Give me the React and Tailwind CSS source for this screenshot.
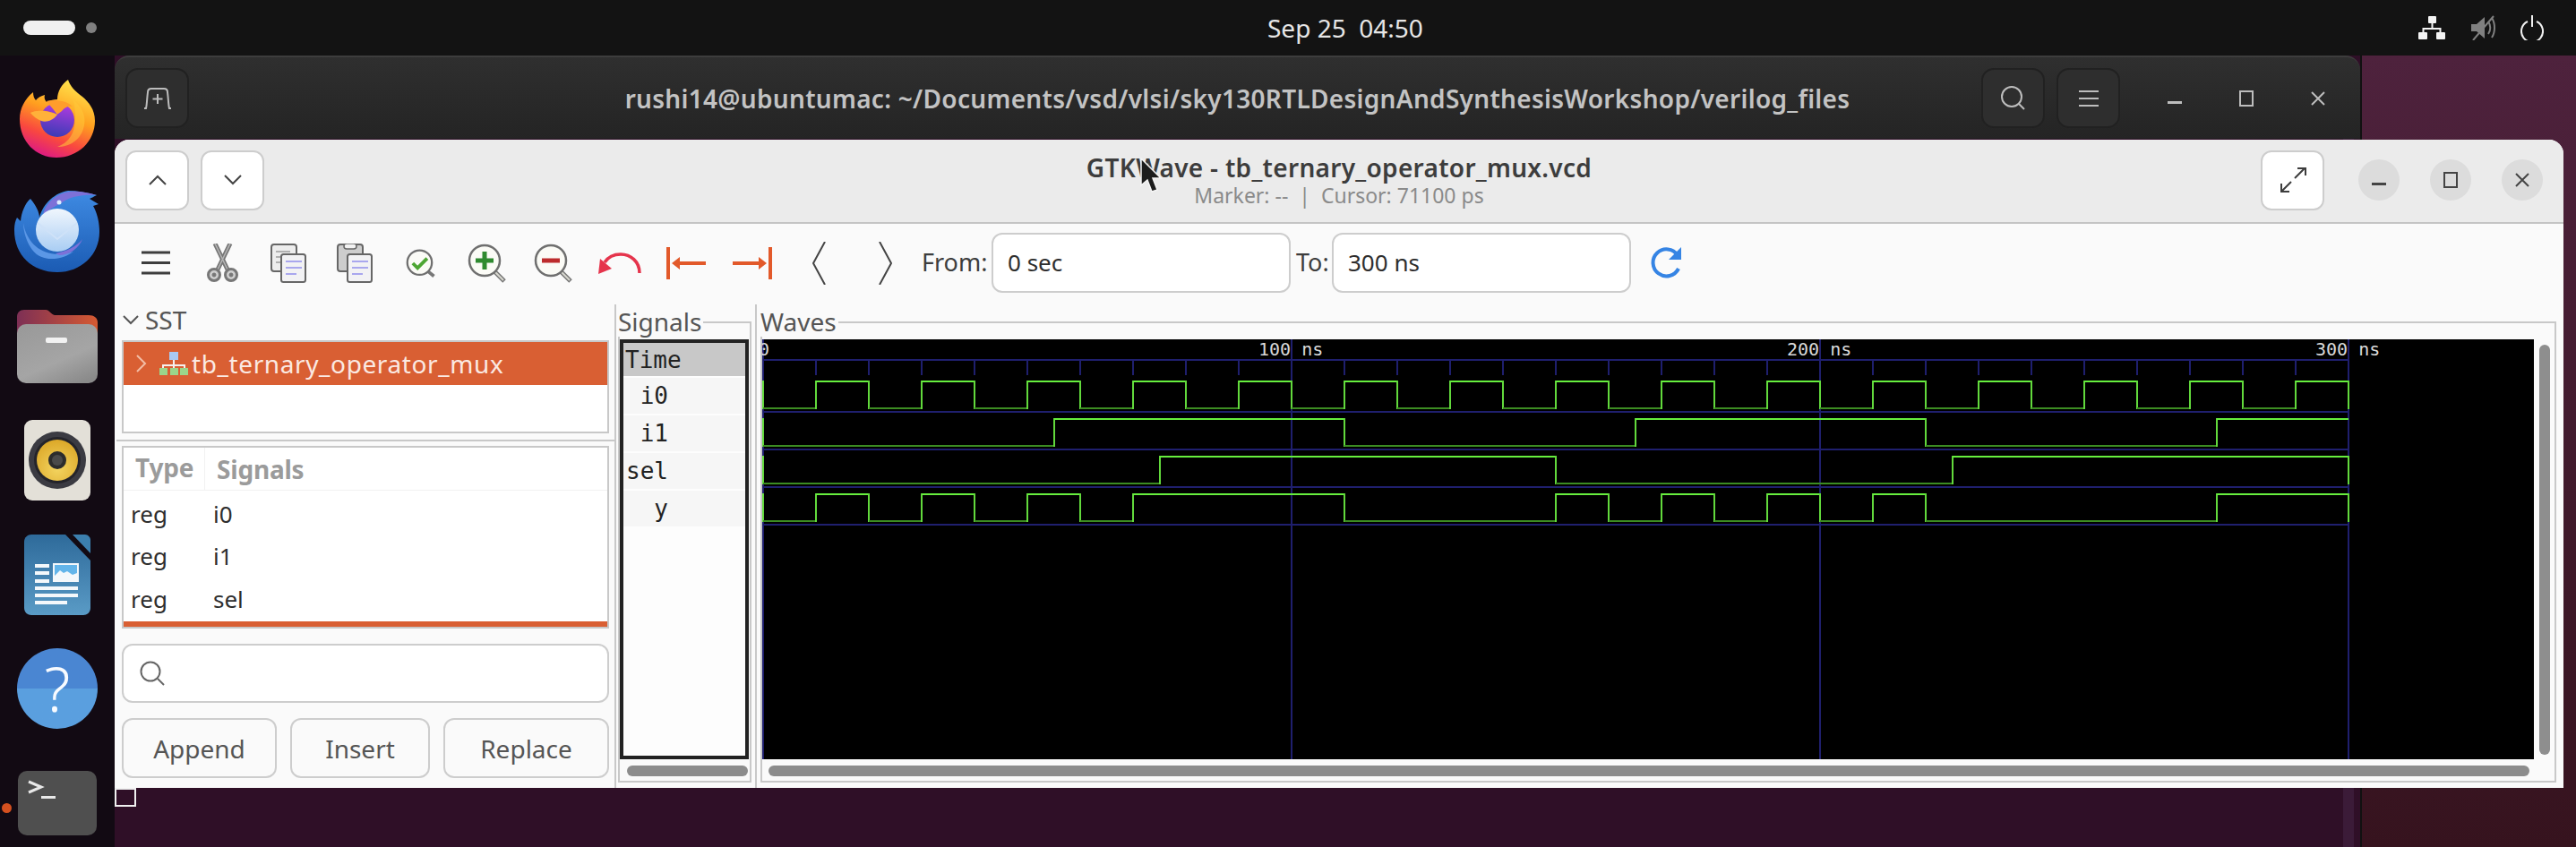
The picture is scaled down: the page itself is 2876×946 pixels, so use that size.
import React from 'react';

const UI = "font-['Noto_Sans',sans-serif]";
const MONO = "font-['DejaVu_Sans_Mono',monospace]";

// gtkwave timing, 5.9px per ns from the left edge of the canvas
const tx = (t) => 1 + t * 5.9;
const i0 = (t) => Math.floor(t / 10) % 2 === 1;
const edges = (list, t) => list.filter((e) => e <= t).length % 2 === 1;
const i1 = (t) => edges([55, 110, 165, 220, 275], t);
const sel = (t) => edges([75, 150, 225], t);
const y = (t) => (sel(t) ? i1(t) : i0(t));

const traces = [
    { name: 'i0', fn: i0, high: 47, low: 77, end: true },
    { name: 'i1', fn: i1, high: 89, low: 119, end: false },
    { name: 'sel', fn: sel, high: 131, low: 161, end: true },
    { name: 'y', fn: y, high: 173, low: 203, end: true },
];

function Trace({ trace }) {
    const parts = [];
    let start = 0;
    let value = trace.fn(0);
    for (let t = 5; t <= 300; t += 5) {
        const next = t === 300 ? !value : trace.fn(t);
        if (next !== value || t === 300) {
            const yy = value ? trace.high : trace.low;
            parts.push(<line key={`h${t}`} x1={tx(start)} x2={tx(t)} y1={yy} y2={yy} stroke={value ? '#66ee3e' : '#3c8c22'} strokeWidth="2" />);
            if (t < 300 || trace.end) {
                parts.push(<line key={`v${t}`} x1={tx(t)} x2={tx(t)} y1={trace.high - 1} y2={trace.low + 1} stroke="#62d93c" strokeWidth="2" />);
            }
            start = t;
            value = next;
        }
    }
    return (
        <g shapeRendering="crispEdges">
            <line x1={tx(0)} x2={tx(0)} y1={trace.high - 1} y2={trace.low + 1} stroke="#62d93c" strokeWidth="2" />
            {parts}
        </g>
    );
}

function WaveCanvas() {
    const ticks = [];
    for (let t = 10; t < 300; t += 10) ticks.push(t);
    return (
        <svg width="1978" height="469" className="block">
            <g stroke="#1f1f6e" strokeWidth="2" shapeRendering="crispEdges">
                {[23, 81, 123, 165, 207].map((v) => (
                    <line key={v} x1="0" x2={tx(300)} y1={v} y2={v} />
                ))}
                {ticks.map((t) => (
                    <line key={t} x1={tx(t)} x2={tx(t)} y1="23" y2="40" />
                ))}
                {[0, 100, 200, 300].map((t) => (
                    <line key={t} x1={tx(t)} x2={tx(t)} y1="0" y2="469" />
                ))}
            </g>
            {traces.map((trace) => (
                <Trace key={trace.name} trace={trace} />
            ))}
        </svg>
    );
}

function WinControls({ color, round }) {
    const slot = `flex h-[46px] w-[46px] items-center justify-center rounded-full ${round ? 'bg-[#dcdcdc]' : ''}`;
    return (
        <div className="flex items-center gap-[34px]">
            <div className={slot}>
                <svg width="16" height="16" fill="none" stroke={color} strokeWidth="3"><path d="M0 12.5h16" /></svg>
            </div>
            <div className={slot}>
                <svg width="16" height="18" fill="none" stroke={color} strokeWidth="2"><rect x="1" y="1" width="14" height="16" /></svg>
            </div>
            <div className={slot}>
                <svg width="16" height="16" fill="none" stroke={color} strokeWidth="2"><path d="M1 1l14 14M15 1L1 15" /></svg>
            </div>
        </div>
    );
}

function Firefox() {
    return (
        <svg width="84" height="88" viewBox="0 0 84 88">
            <defs>
                <linearGradient id="ffa" x1="0.75" y1="0" x2="0.35" y2="1">
                    <stop offset="0" stopColor="#ffe94f" />
                    <stop offset="0.45" stopColor="#ff9f1f" />
                    <stop offset="0.75" stopColor="#f9483f" />
                    <stop offset="1" stopColor="#dc1a84" />
                </linearGradient>
                <linearGradient id="ffb" x1="0.6" y1="0" x2="0.4" y2="1">
                    <stop offset="0" stopColor="#b03be0" />
                    <stop offset="1" stopColor="#3a3bb5" />
                </linearGradient>
            </defs>
            <path d="M41 88C18 88 0 70 0 45C0 33 6 22 15 15C15 19 16 22 18 24C20 21 24 19 28 18C27 21 28 24 30 26C34 24 38 23 42 23C42 14 47 6 54 1C56 8 62 14 70 20C77 26 84 34 84 47C84 70 65 88 41 88Z" fill="url(#ffa)" />
            <path d="M60 24C70 32 74 42 72 52C69 68 56 76 42 76C58 70 66 56 60 24Z" fill="#ffc93a" opacity="0.55" />
            <circle cx="42" cy="46" r="19" fill="url(#ffb)" />
            <path d="M30 25C38 23 52 24 59 31C54 30 50 32 47 36C42 40 38 43 30 42C24 41 16 41 12 38C20 35 28 34 42 40C36 32 33 29 30 25Z" fill="#ff9d2b" />
            <path d="M12 38C20 34 32 36 42 40C37 47 29 49 24 47C19 45 15 42 12 38Z" fill="#ffb13a" />
        </svg>
    );
}

function Thunderbird() {
    return (
        <svg width="96" height="92" viewBox="0 0 96 92">
            <defs>
                <linearGradient id="tba" x1="0.5" y1="0" x2="0.5" y2="1">
                    <stop offset="0" stopColor="#3f8be3" />
                    <stop offset="1" stopColor="#1b5bb3" />
                </linearGradient>
                <linearGradient id="tbb" x1="0.5" y1="0" x2="0.5" y2="1">
                    <stop offset="0" stopColor="#f0f6fd" />
                    <stop offset="1" stopColor="#a9cdf3" />
                </linearGradient>
            </defs>
            <path d="M48 91C20 91 0 72 0 44C0 38 1 34 3 30L7 34C8 24 12 14 18 9C24 16 28 24 28 30C32 14 46 2 60 0C70 0 82 2 92 5C88 7 86 8 84 9L94 15L88 17C92 24 95 34 95 46C95 72 74 91 48 91Z" fill="url(#tba)" />
            <path d="M32 26C36 12 48 3 62 1C72 0 82 2 92 5C78 4 62 6 52 14C44 18 38 22 32 26Z" fill="#7d71d8" />
            <circle cx="50" cy="13" r="2.5" fill="#dcecff" />
            <path d="M10 36C14 60 34 78 66 68C56 76 32 82 20 66C14 58 10 46 10 36Z" fill="#5b97e6" />
            <path d="M46 70C58 68 70 62 76 54C72 64 62 72 50 72Z" fill="#7d71d8" />
            <circle cx="48" cy="44" r="24" fill="url(#tbb)" />
            <path d="M26 36L48 54L70 36" fill="none" stroke="#cfe2f8" strokeWidth="2" />
        </svg>
    );
}

function Files() {
    return (
        <svg width="90" height="82" viewBox="0 0 90 82">
            <defs>
                <linearGradient id="fa" x1="0" y1="0" x2="1" y2="0">
                    <stop offset="0" stopColor="#7d2f55" />
                    <stop offset="1" stopColor="#d65a32" />
                </linearGradient>
                <linearGradient id="fb" x1="0.2" y1="0" x2="0.8" y2="1">
                    <stop offset="0" stopColor="#9a9a9a" />
                    <stop offset="0.6" stopColor="#a5a5a5" />
                    <stop offset="1" stopColor="#8a8a8a" />
                </linearGradient>
            </defs>
            <path d="M0 20V8C0 3 3 0 8 0H32C36 0 38 5 42 6H80C86 6 90 9 90 14V30H0Z" fill="url(#fa)" />
            <rect x="0" y="16" width="90" height="66" rx="10" fill="url(#fb)" />
            <rect x="32" y="31" width="24" height="6" rx="2" fill="#f2f2f2" />
        </svg>
    );
}

function Rhythmbox() {
    return (
        <svg width="74" height="90" viewBox="0 0 74 90">
            <defs>
                <radialGradient id="ra" cx="0.5" cy="0.7" r="0.7">
                    <stop offset="0" stopColor="#f3d460" />
                    <stop offset="1" stopColor="#dca828" />
                </radialGradient>
            </defs>
            <rect x="0" y="0" width="74" height="90" rx="9" fill="#e3e0d8" />
            <circle cx="37" cy="45" r="32" fill="#3b3b42" />
            <circle cx="37" cy="45" r="26" fill="#24242a" />
            <circle cx="37" cy="45" r="23" fill="url(#ra)" />
            <circle cx="37" cy="45" r="10" fill="#2c2c2c" />
            <circle cx="37" cy="45" r="6" fill="#4a4a4a" />
        </svg>
    );
}

function Writer() {
    return (
        <svg width="74" height="90" viewBox="0 0 74 90">
            <defs>
                <linearGradient id="wa" x1="0.5" y1="0" x2="0.5" y2="1">
                    <stop offset="0" stopColor="#2e6a9a" />
                    <stop offset="1" stopColor="#5a9bc6" />
                </linearGradient>
            </defs>
            <path d="M8 0H46L74 29V82C74 87 70 90 66 90H8C4 90 0 87 0 82V8C0 3 4 0 8 0Z" fill="url(#wa)" />
            <path d="M54 0H68C71 0 74 3 74 6V21Z" fill="#3c7fae" />
            <g fill="#f4f8fb">
                <rect x="12" y="33" width="16" height="4" />
                <rect x="12" y="41" width="16" height="4" />
                <rect x="12" y="50" width="16" height="4" />
                <rect x="12" y="58" width="48" height="4" />
                <rect x="12" y="66" width="48" height="4" />
                <rect x="12" y="74" width="36" height="4" />
            </g>
            <rect x="33" y="33" width="27" height="19" fill="#63b5ea" stroke="#f4f8fb" strokeWidth="2" />
            <path d="M34 51V46L40 40L44 43L48 41L54 45L59 43V51Z" fill="#f4f8fb" />
        </svg>
    );
}

function Help() {
    return (
        <div className={`flex h-[90px] w-[90px] items-center justify-center rounded-full bg-gradient-to-b from-[#4a86d2] from-50% to-[#5a9fdf] to-50% text-[68px] font-light leading-none text-[#f8fbff] ${UI}`}>
            ?
        </div>
    );
}

function TerminalIcon() {
    return (
        <svg width="88" height="72" viewBox="0 0 88 72">
            <rect x="0" y="0" width="88" height="72" rx="10" fill="#4f4f4f" />
            <path d="M12 12L26 18L12 24" fill="none" stroke="#e8e8e8" strokeWidth="3" />
            <rect x="26" y="28" width="16" height="3" fill="#e8e8e8" />
        </svg>
    );
}

function Dock() {
    const icons = [Firefox, Thunderbird, Files, Rhythmbox, Writer, Help, TerminalIcon];
    return (
        <div className="relative flex h-[884px] w-[128px] flex-col overflow-hidden bg-[#120a13] pt-[6px]">
            {icons.map((Icon, i) => (
                <div key={i} className="flex h-[127.5px] shrink-0 items-center justify-center">
                    <Icon />
                </div>
            ))}
            <div className="absolute left-[2px] top-[835px] h-[11px] w-[11px] rounded-full bg-[#d4501f]" />
        </div>
    );
}

function TopBar() {
    return (
        <div className={`grid h-[62px] shrink-0 grid-cols-[1415px_auto_1fr] items-center bg-[#131313] text-white ${UI}`}>
            <div className="flex items-center gap-[12px] pl-[26px]">
                <div className="h-[16px] w-[58px] rounded-full bg-[#f0f0f0]" />
                <div className="h-[12px] w-[12px] rounded-full bg-[#808080]" />
            </div>
            <div className="whitespace-pre text-[28px] leading-[34px] text-[#e6e6e6]">Sep 25  04:50</div>
            <div className="flex items-center justify-end gap-[28px] pr-[36px]">
                <svg width="30" height="26" viewBox="0 0 30 26" fill="#f4f4f4">
                    <rect x="11" y="0" width="9" height="8" rx="1" />
                    <rect x="0" y="18" width="10" height="8" rx="1" />
                    <rect x="20" y="18" width="10" height="8" rx="1" />
                    <path d="M14.5 8h2v5h9v5h-2v-3h-17v3h-2v-5h10z" />
                </svg>
                <svg width="28" height="28" viewBox="0 0 28 28" fill="none">
                    <path d="M1 10h6l9-8v24l-9-8H1z" fill="#808080" />
                    <path d="M20 7c3 4 3 10 0 14M24 3c4 6 4 16 0 22" stroke="#808080" strokeWidth="2" />
                    <path d="M26 1L3 28" stroke="#808080" strokeWidth="2" />
                </svg>
                <svg width="26" height="28" viewBox="0 0 26 28" fill="none" stroke="#f0f0f0" strokeWidth="2">
                    <path d="M8 7a12 12 0 1 0 10 0" />
                    <path d="M13 0v13" />
                </svg>
            </div>
        </div>
    );
}

function DarkButton({ children, className }) {
    return (
        <div className={`flex h-[67px] items-center justify-center rounded-[14px] border-2 border-[#212121] bg-[#2e2e2e] ${className}`}>
            {children}
        </div>
    );
}

function TerminalWindow() {
    return (
        <div className="absolute left-0 top-0 flex h-full w-[2509px] flex-col border-r-2 border-[#111111] bg-[#2f0f27]">
            <div className={`grid h-[93px] grid-cols-[1fr_auto_1fr] items-center rounded-t-[16px] border-t-2 border-[#3d3d3d] bg-gradient-to-b from-[#2f2f2f] to-[#242424] ${UI}`}>
                <div className="pl-[12px]">
                    <DarkButton className="w-[71px]">
                        <svg width="30" height="24" viewBox="0 0 30 24" fill="none" stroke="#bdbdbd" strokeWidth="2">
                            <path d="M0 23h2c1-4 1-10 2-18c0-2 1-4 4-4h14c3 0 4 2 4 4c1 8 1 14 2 18h2" />
                            <path d="M15 7v11M9.5 12.5h11" />
                        </svg>
                    </DarkButton>
                </div>
                <div className="text-[28px] font-semibold tracking-[0.3px] text-[#c3c3c3]">
                    rushi14@ubuntumac: ~/Documents/vsd/vlsi/sky130RTLDesignAndSynthesisWorkshop/verilog_files
                </div>
                <div className="flex items-center justify-end pr-[24px]">
                    <DarkButton className="w-[71px]">
                        <svg width="28" height="28" viewBox="0 0 28 28" fill="none" stroke="#bdbdbd" strokeWidth="2">
                            <ellipse cx="12" cy="12" rx="11" ry="11" />
                            <path d="M20 20l6 6" />
                        </svg>
                    </DarkButton>
                    <DarkButton className="ml-[13px] mr-[38px] w-[71px]">
                        <svg width="22" height="20" viewBox="0 0 22 20" fill="none" stroke="#bdbdbd" strokeWidth="2">
                            <path d="M0 2h22M0 10h22M0 18h22" />
                        </svg>
                    </DarkButton>
                    <WinControls color="#bdbdbd" />
                </div>
            </div>
            <div className="relative flex-1">
                <div className="absolute left-0 top-[725px] h-[21px] w-[24px] border-2 border-[#f0f0f0]" />
                <div className="absolute bottom-0 right-[7px] top-0 w-[12px] bg-[#3b1b38]" />
            </div>
        </div>
    );
}

function LightButton({ children, className }) {
    return (
        <div className={`flex h-[67px] items-center justify-center rounded-[12px] border-2 border-[#cdcdcd] bg-white ${className}`}>
            {children}
        </div>
    );
}

function GtkHeader() {
    return (
        <div className={`grid h-[94px] shrink-0 grid-cols-[1fr_auto_1fr] items-center border-b-2 border-[#c4c4c4] bg-[#ebebeb] pb-[2px] ${UI}`}>
            <div className="flex gap-[13px] pl-[12px]">
                <LightButton className="w-[71px]">
                    <svg width="20" height="12" viewBox="0 0 20 12" fill="none" stroke="#444444" strokeWidth="2"><path d="M1 11L10 2l9 9" /></svg>
                </LightButton>
                <LightButton className="w-[71px]">
                    <svg width="20" height="12" viewBox="0 0 20 12" fill="none" stroke="#444444" strokeWidth="2"><path d="M1 1l9 9 9-9" /></svg>
                </LightButton>
            </div>
            <div className="flex flex-col items-center">
                <div className="text-[28px] font-semibold leading-[34px] tracking-[0.3px] text-[#3d3d3d]">GTKWave - tb_ternary_operator_mux.vcd</div>
                <div className="whitespace-pre text-[23px] leading-[28px] text-[#8a8a8a]">Marker: --  |  Cursor: 71100 ps</div>
            </div>
            <div className="flex items-center justify-end pr-[23px]">
                <LightButton className="mr-[38px] w-[71px]">
                    <svg width="30" height="28" viewBox="0 0 30 28" fill="none" stroke="#3d3d3d" strokeWidth="2">
                        <path d="M17 12L28 1M20 1h9v8M13 16L2 27M2 18v9h9" />
                    </svg>
                </LightButton>
                <WinControls color="#444444" round />
            </div>
        </div>
    );
}

function Magnifier({ children, size = 44 }) {
    return (
        <svg width={size} height={size} viewBox="0 0 44 44" fill="none">
            <path d="M30 31l11 11" stroke="#777777" strokeWidth="5" />
            <path d="M31 32l9 9" stroke="#d8d8d0" strokeWidth="2" />
            <circle cx="19" cy="19" r="17" fill="#fbfbf6" stroke="#6f6f6f" strokeWidth="2.5" />
            {children}
        </svg>
    );
}

function DocIcon({ clip }) {
    return (
        <svg width="40" height="44" viewBox="0 0 40 44">
            <rect x="1" y="1" width="28" height="30" rx="3" fill={clip ? '#cdcdcd' : '#ededed'} stroke="#666666" strokeWidth="2" />
            {clip ? (
                <rect x="8" y="0" width="14" height="6" rx="3" fill="#f2f2f2" stroke="#666666" strokeWidth="1.5" />
            ) : (
                <path d="M6 9h16M6 15h6M6 21h6" stroke="#b0b0b0" strokeWidth="2" />
            )}
            <rect x="12" y="12" width="27" height="31" rx="2.5" fill="#f2f2f4" stroke="#666666" strokeWidth="2" />
            <path d="M17 20h18M17 27h18M17 34h12" stroke="#a9a7ee" strokeWidth="2" />
        </svg>
    );
}

function Toolbar() {
    const tools = [
        <svg key="menu" width="32" height="27" viewBox="0 0 32 27" fill="none" stroke="#3d3d3d" strokeWidth="3"><path d="M0 2h32M0 13.5h32M0 25h32" /></svg>,
        <svg key="cut" width="37" height="44" viewBox="0 0 37 44" fill="none" stroke="#777777">
            <path d="M10 0l14 29M27 0L13 29" strokeWidth="5" />
            <path d="M10 0l14 29M27 0L13 29" stroke="#b5b5b5" strokeWidth="1.5" />
            <circle cx="9" cy="35" r="6.5" fill="#cfcfcf" strokeWidth="3" />
            <circle cx="28" cy="35" r="6.5" fill="#cfcfcf" strokeWidth="3" />
            <circle cx="9" cy="35" r="2" fill="#777777" />
            <circle cx="28" cy="35" r="2" fill="#777777" />
        </svg>,
        <DocIcon key="copy" />,
        <DocIcon key="paste" clip />,
        <svg key="fit" width="34" height="32" viewBox="0 0 44 42" fill="none">
            <path d="M30 31l11 9" stroke="#777777" strokeWidth="5" />
            <circle cx="20" cy="20" r="18" fill="#fbfbf6" stroke="#6f6f6f" strokeWidth="3" />
            <path d="M10 21l7 7 14-14" stroke="#4da632" strokeWidth="5" />
        </svg>,
        <Magnifier key="in"><path d="M19 9v20M9 19h20" stroke="#2f8a2f" strokeWidth="5" /></Magnifier>,
        <Magnifier key="out"><path d="M9 19h20" stroke="#bd2c2c" strokeWidth="5" /></Magnifier>,
        <svg key="undo" width="48" height="24" viewBox="0 0 48 24" fill="none">
            <path d="M46 23C46 10 36 2 25 2C17 2 11 5 7 11" stroke="#e5344c" strokeWidth="3.5" />
            <path d="M0 24L2 7L15 18Z" fill="#e5344c" />
        </svg>,
        <svg key="left" width="44" height="36" viewBox="0 0 44 36" fill="#e2592a">
            <rect x="0" y="0" width="4" height="36" />
            <path d="M6 18L15 11V16H44V20H15V25Z" />
        </svg>,
        <svg key="right" width="44" height="36" viewBox="0 0 44 36" fill="#e2592a">
            <rect x="40" y="0" width="4" height="36" />
            <path d="M38 18L29 11V16H0V20H29V25Z" />
        </svg>,
        <svg key="prev" width="15" height="48" viewBox="0 0 15 48" fill="none" stroke="#444444" strokeWidth="2"><path d="M14 0L1 24l13 24" /></svg>,
        <svg key="next" width="15" height="48" viewBox="0 0 15 48" fill="none" stroke="#444444" strokeWidth="2"><path d="M1 0l13 24L1 48" /></svg>,
    ];
    const input = 'flex h-[67px] w-[334px] items-center rounded-[12px] border-2 border-[#cdcdcd] bg-white pl-[16px] text-[26px] text-[#2e2e2e]';
    return (
        <div className={`flex h-[90px] shrink-0 items-center pb-[3px] pl-[9px] ${UI}`}>
            {tools.map((tool) => (
                <div key={tool.key} className="flex w-[74px] items-center justify-center">{tool}</div>
            ))}
            <div className="ml-[4px] w-[78px] text-[27px] text-[#3d3d3d]">From:</div>
            <div className={input}>0 sec</div>
            <div className="w-[46px] pl-[6px] text-[27px] text-[#3d3d3d]">To:</div>
            <div className={input}>300 ns</div>
            <svg className="ml-[22px]" width="37" height="36" viewBox="0 0 37 36" fill="none">
                <path d="M31 24A15 15 0 1 1 30 9" stroke="#3584e4" strokeWidth="4" />
                <path d="M34 0V14H20Z" fill="#3584e4" />
            </svg>
        </div>
    );
}

function LeftPane() {
    const rows = [['reg', 'i0'], ['reg', 'i1'], ['reg', 'sel']];
    return (
        <div className={`flex w-[560px] flex-col border-r-2 border-[#c8c8c8] ${UI}`}>
            <div className="flex h-[40px] items-center pb-[6px] pl-[9px] text-[28px] leading-[34px] text-[#555555]">
                <svg width="18" height="11" viewBox="0 0 18 11" fill="none" stroke="#555555" strokeWidth="2"><path d="M1 1l8 8 8-8" /></svg>
                <span className="ml-[7px]">SST</span>
            </div>
            <div className="ml-[8px] h-[104px] w-[544px] border-2 border-[#c8c8c8] bg-white">
                <div className="flex h-[48px] items-center bg-[#d95f33] pl-[14px] text-[28px] leading-[34px] tracking-[0.6px] text-[#fbe9e2]">
                    <svg width="12" height="20" viewBox="0 0 12 20" fill="none" stroke="#f2bda6" strokeWidth="2"><path d="M1 1l9 9-9 9" /></svg>
                    <svg className="ml-[14px]" width="32" height="26" viewBox="0 0 32 26">
                        <rect x="11" y="0" width="10" height="9" fill="#a9c8f2" />
                        <path d="M15 9h2v5h12v4h-2v-2H17v2h-2v-2H5v2H3v-4h12z" fill="#f5f0ee" />
                        <rect x="0" y="18" width="9" height="8" fill="#9bd58a" />
                        <rect x="12" y="18" width="9" height="8" fill="#9bd58a" />
                        <rect x="23" y="18" width="9" height="8" fill="#9bd58a" />
                    </svg>
                    <span className="ml-[4px]">tb_ternary_operator_mux</span>
                </div>
            </div>
            <div className="ml-[2px] mt-[7px] h-[2px] bg-[#c8c8c8]" />
            <div className="ml-[8px] mt-[5px] flex h-[204px] w-[544px] flex-col border-2 border-[#c8c8c8] bg-white">
                <div className="flex h-[48px] items-center border-b border-[#f2f2f2] text-[28px] font-bold tracking-[-0.2px] text-[#9b9b9b]">
                    <div className="h-full w-[91px] border-r border-[#f2f2f2] pl-[13px] leading-[44px]">Type</div>
                    <div className="pl-[13px]">Signals</div>
                </div>
                {rows.map(([type, name]) => (
                    <div key={name} className="flex h-[47.5px] items-center pt-[5px] text-[26px] text-[#2e2e2e]">
                        <div className="w-[100px] pl-[8px]">{type}</div>
                        <div>{name}</div>
                    </div>
                ))}
                <div className="mt-auto h-[6px] bg-[#d95f33]" />
            </div>
            <div className="ml-[8px] mt-[17px] flex h-[66px] w-[544px] items-center rounded-[12px] border-2 border-[#cdcdcd] bg-white pl-[18px]">
                <svg width="28" height="28" viewBox="0 0 28 28" fill="none" stroke="#666666" strokeWidth="2">
                    <circle cx="12" cy="12" r="10.5" />
                    <path d="M20 20l7 7" />
                </svg>
            </div>
            <div className="ml-[8px] mt-[17px] flex w-[544px] gap-[15px] text-[28px] text-[#555555]">
                <div className="flex h-[67px] w-[173px] items-center justify-center rounded-[12px] border-2 border-[#cdcdcd] bg-[#fafafa]">Append</div>
                <div className="flex h-[67px] w-[156px] items-center justify-center rounded-[12px] border-2 border-[#cdcdcd] bg-[#fafafa]">Insert</div>
                <div className="flex h-[67px] w-[185px] items-center justify-center rounded-[12px] border-2 border-[#cdcdcd] bg-[#fafafa]">Replace</div>
            </div>
        </div>
    );
}

function Frame({ label, className, children }) {
    return (
        <div className={`relative mt-[19px] h-[515px] border-2 border-[#c8c8c8] ${className}`}>
            <div className={`absolute -top-[19px] left-[-2px] bg-[#fafafa] pr-[2px] text-[28px] leading-[34px] text-[#555555] ${UI}`}>{label}</div>
            {children}
        </div>
    );
}

function SignalsPane() {
    return (
        <div className="w-[157px] border-r-2 border-[#c8c8c8] pl-[2px]">
            <Frame label="Signals" className="w-[149px]">
                <div className={`mt-[18px] flex h-[469px] w-[144px] flex-col border-[4px] border-[#222222] bg-[#fdfdfd] ${MONO} text-[26px] text-[#222222]`}>
                    <div className="flex h-[37px] items-center bg-[#c8c8c8] pl-[2px] leading-none">Time</div>
                    {traces.map((t) => (
                        <div key={t.name} className="mt-[2px] flex h-[40px] w-full items-center bg-[#f6f6f6] leading-none">
                            <div className="w-[50px] text-right">{t.name}</div>
                        </div>
                    ))}
                </div>
                <div className="ml-[8px] mt-[7px] h-[12px] w-[135px] rounded-full bg-[#8c8c8c]" />
            </Frame>
        </div>
    );
}

function WavesPane() {
    const labels = [
        { text: '0', cls: 'left-[-4px]', unit: false },
        { text: '100', cls: 'left-[554px]', unit: true },
        { text: '200', cls: 'left-[1144px]', unit: true },
        { text: '300', cls: 'left-[1734px]', unit: true },
    ];
    return (
        <div className="flex-1 pl-[4px]">
            <Frame label="Waves" className="w-[2005px]">
                <div className="mt-[18px] flex">
                    <div className="relative h-[469px] w-[1978px] overflow-hidden bg-black">
                        <WaveCanvas />
                        {labels.map((l) => (
                            <div key={l.text} className={`absolute top-[-1px] whitespace-pre text-[20px] leading-[24px] text-[#d8d8d8] ${MONO} ${l.cls}`}>
                                {l.unit ? `${l.text} ns` : l.text}
                            </div>
                        ))}
                    </div>
                    <div className="ml-[6px] mt-[6px] h-[458px] w-[12px] rounded-full bg-[#8e8e8e]" />
                </div>
                <div className="ml-[7px] mt-[7px] h-[12px] w-[1966px] rounded-full bg-[#8c8c8c]" />
            </Frame>
        </div>
    );
}

function GtkWaveWindow() {
    return (
        <div className="absolute left-0 top-[94px] flex h-[724px] w-[2734px] flex-col overflow-hidden rounded-t-[16px] bg-[#fafafa]">
            <GtkHeader />
            <Toolbar />
            <div className="flex min-h-0 flex-1">
                <LeftPane />
                <SignalsPane />
                <WavesPane />
            </div>
        </div>
    );
}

export default function App() {
    return (
        <div className="relative flex h-[946px] w-[2876px] flex-col overflow-hidden bg-black">
            <TopBar />
            <div className="flex min-h-0 flex-1">
                <Dock />
                <div className="relative flex-1 bg-gradient-to-b from-[#4e223d] to-[#36131e]">
                    <TerminalWindow />
                    <GtkWaveWindow />
                </div>
            </div>
            {/* mouse pointer sits over the title */}
            <svg className="absolute left-[1272px] top-[176px]" width="26" height="42" viewBox="0 0 26 42">
                <path d="M2 1V31L9 25L14 38L20 36L15 23H24Z" fill="#1c1c1c" stroke="#f5f5f5" strokeWidth="1.5" />
            </svg>
        </div>
    );
}
